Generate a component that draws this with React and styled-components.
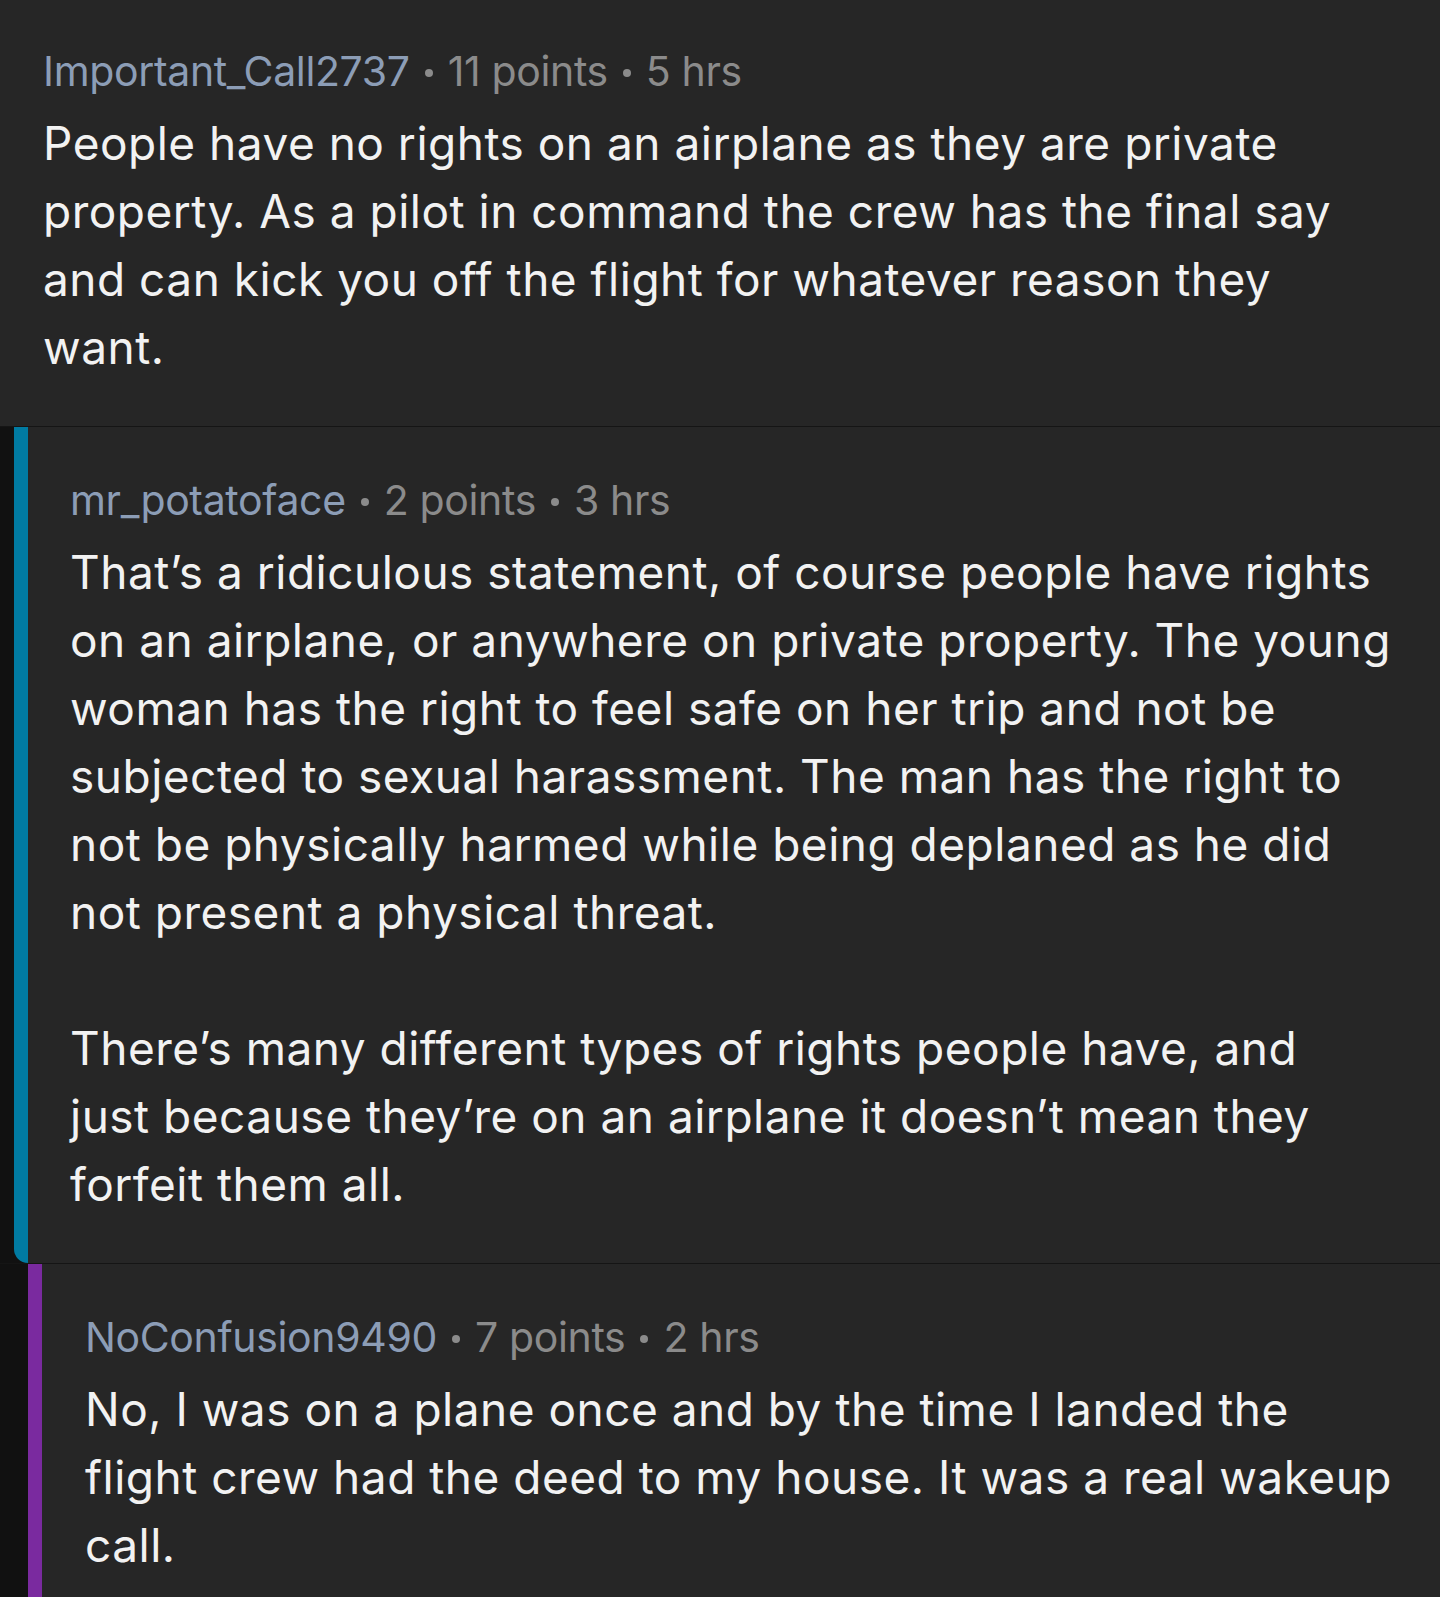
import React from "react";
import styled, { createGlobalStyle } from "styled-components";

const GlobalStyle = createGlobalStyle`
  html, body {
    margin: 0;
    padding: 0;
    background: #111111;
  }
  body {
    font-family: Inter, Roboto, "Noto Sans", "Liberation Sans", sans-serif;
    -webkit-font-smoothing: antialiased;
  }
`;

const comments = [
  {
    depth: 0,
    user: "Important_Call2737",
    points: "11 points",
    age: "5 hrs",
    lines: [
      "People have no rights on an airplane as they are private",
      "property. As a pilot in command the crew has the final say",
      "and can kick you off the flight for whatever reason they",
      "want.",
    ],
  },
  {
    depth: 1,
    color: "#017ba2",
    user: "mr_potatoface",
    points: "2 points",
    age: "3 hrs",
    lines: [
      "That\u2019s a ridiculous statement, of course people have rights",
      "on an airplane, or anywhere on private property. The young",
      "woman has the right to feel safe on her trip and not be",
      "subjected to sexual harassment. The man has the right to",
      "not be physically harmed while being deplaned as he did",
      "not present a physical threat.",
      "",
      "There\u2019s many different types of rights people have, and",
      "just because they\u2019re on an airplane it doesn\u2019t mean they",
      "forfeit them all.",
    ],
  },
  {
    depth: 2,
    color: "#7a2a9f",
    user: "NoConfusion9490",
    points: "7 points",
    age: "2 hrs",
    lines: [
      "No, I was on a plane once and by the time I landed the",
      "flight crew had the deed to my house. It was a real wakeup",
      "call.",
    ],
  },
];

export default function App() {
  return (
    <>
      <GlobalStyle />
      <Thread>
        {comments.map((c, i) => (
          <Row key={i}>
            {c.depth > 0 && <Gutter $depth={c.depth} />}
            {c.depth > 0 && <Bar $color={c.color} $rounded={c.depth === 1} />}
            <Comment $depth={c.depth}>
              <Meta>
                <User>{c.user}</User>
                <Dot />
                <span>{c.points}</span>
                <Dot />
                <span>{c.age}</span>
              </Meta>
              <Body>
                {c.lines.map((l, j) => (
                  <Line key={j}>{l || "\u00a0"}</Line>
                ))}
              </Body>
            </Comment>
          </Row>
        ))}
      </Thread>
    </>
  );
}

const Thread = styled.div`
  display: flex;
  flex-direction: column;
  min-height: 1597px;
  background: #111111;
`;

const Row = styled.div`
  display: flex;
  align-items: stretch;
  border-bottom: 1px solid #151515;
  &:last-child {
    border-bottom: none;
    flex: 1;
  }
`;

const Gutter = styled.div`
  flex: 0 0 ${(p) => p.$depth * 14}px;
  background: #111111;
`;

const Bar = styled.div`
  flex: 0 0 14px;
  background: ${(p) => p.$color};
  border-bottom-left-radius: ${(p) => (p.$rounded ? "15px" : "0")};
`;

const Comment = styled.div`
  flex: 1;
  min-width: 0;
  background: #262626;
  padding: ${(p) => (p.$depth === 0 ? "43px 43px 45px" : "45px 43px 45px")};
  padding-left: ${(p) => (p.$depth === 0 ? 43 : p.$depth === 1 ? 42 : 43)}px;
`;

const Meta = styled.div`
  display: flex;
  align-items: center;
  gap: 15px;
  font-size: 41px;
  line-height: 56px;
  color: #8b8b8b;
  letter-spacing: -0.35px;
  margin-bottom: 10px;
`;

const User = styled.span`
  color: #8c9db6;
`;

const Dot = styled.span`
  width: 8px;
  height: 8px;
  border-radius: 50%;
  background: #8b8b8b;
  margin-top: 4px;
`;

const Body = styled.div`
  font-size: 46px;
  line-height: 68px;
  color: #f2f2f2;
  letter-spacing: 0.5px;
`;

const Line = styled.div`
  white-space: nowrap;
`;
